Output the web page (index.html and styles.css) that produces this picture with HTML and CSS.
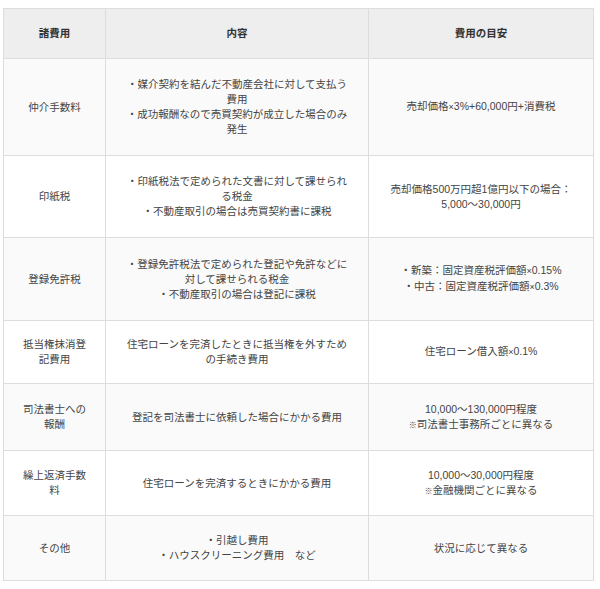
FILE: index.html
```html
<!DOCTYPE html>
<html lang="ja">
<head>
<meta charset="utf-8">
<link rel="stylesheet" href="styles.css">
</head>
<body>
<table class="costs">
  <colgroup>
    <col class="c1"><col class="c2"><col class="c3">
  </colgroup>
  <thead>
    <tr class="h">
      <th>諸費用</th>
      <th>内容</th>
      <th>費用の目安</th>
    </tr>
  </thead>
  <tbody>
    <tr class="r1 odd">
      <td>仲介手数料</td>
      <td>・媒介契約を結んだ不動産会社に対して支払う<br>費用<br>・成功報酬なので売買契約が成立した場合のみ<br>発生</td>
      <td>売却価格<span class="x">×</span>3%+60,000円+消費税</td>
    </tr>
    <tr class="r2">
      <td>印紙税</td>
      <td>・印紙税法で定められた文書に対して課せられ<br>る税金<br>・不動産取引の場合は売買契約書に課税</td>
      <td>売却価格500万円超1億円以下の場合：<br>5,000〜30,000円</td>
    </tr>
    <tr class="r3 odd">
      <td>登録免許税</td>
      <td>・登録免許税法で定められた登記や免許などに<br>対して課せられる税金<br>・不動産取引の場合は登記に課税</td>
      <td>・新築：固定資産税評価額<span class="x">×</span>0.15%<br>・中古：固定資産税評価額<span class="x">×</span>0.3%</td>
    </tr>
    <tr class="r4">
      <td>抵当権抹消登<br>記費用</td>
      <td>住宅ローンを完済したときに抵当権を外すため<br>の手続き費用</td>
      <td>住宅ローン借入額<span class="x">×</span>0.1%</td>
    </tr>
    <tr class="r5 odd">
      <td>司法書士への<br>報酬</td>
      <td>登記を司法書士に依頼した場合にかかる費用</td>
      <td>10,000〜130,000円程度<br><span class="note">※</span>司法書士事務所ごとに異なる</td>
    </tr>
    <tr class="r6">
      <td>繰上返済手数<br>料</td>
      <td>住宅ローンを完済するときにかかる費用</td>
      <td>10,000〜30,000円程度<br><span class="note">※</span>金融機関ごとに異なる</td>
    </tr>
    <tr class="r7 odd">
      <td>その他</td>
      <td>・引越し費用<br>・ハウスクリーニング費用　など</td>
      <td>状況に応じて異なる</td>
    </tr>
  </tbody>
</table>
</body>
</html>
```
FILE: styles.css
```css
html, body {
  margin: 0;
  padding: 0;
  background: #ffffff;
}
body {
  padding: 8px 0 0 3px;
  font-family: "Liberation Sans", "Noto Sans CJK JP", sans-serif;
  color: #444444;
}
.costs {
  border-collapse: collapse;
  table-layout: fixed;
  width: 590px;
  font-size: 10.5px;
  line-height: 15px;
}
.c1 { width: 102px; }
.c2 { width: 263px; }
.c3 { width: 225px; }
.costs th,
.costs td {
  border: 1px solid #dddddd;
  text-align: center;
  vertical-align: middle;
  padding: 0 8px;
}
.costs th {
  background: #eeeeee;
  font-weight: bold;
  color: #333333;
}
.costs td { background: #ffffff; }
.costs .odd td { background: #fafafa; }
.x { font-size: 9px; }
.note { font-size: 8px; }
.h { height: 50px; }
.r1 { height: 97px; }
.r2 { height: 82px; }
.r3 { height: 83px; }
.r4 { height: 63px; }
.r5 { height: 67px; }
.r6 { height: 65px; }
.r7 { height: 65px; }
```
